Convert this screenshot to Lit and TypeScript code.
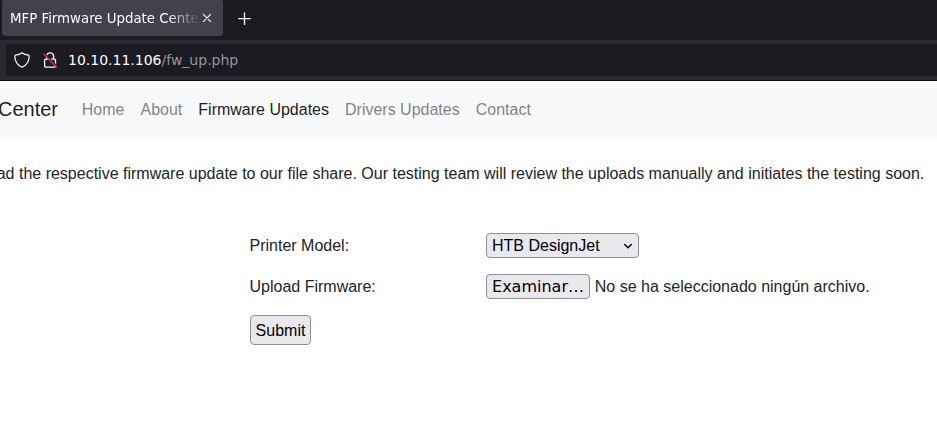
import { LitElement, html, css } from "lit";
import { customElement, property } from "lit/decorators.js";

@customElement("browser-chrome")
class BrowserChrome extends LitElement {
  @property() tabTitle = "";
  @property() host = "";
  @property() path = "";

  static styles = css`
    :host { display: block; height: 81px; box-sizing: border-box; background: #1c1b22; border-bottom: 1px solid #0c0c0d; color: #fbfbfe; font-family: "DejaVu Sans", sans-serif; }
    .tabs { display: flex; height: 40px; align-items: flex-start; }
    .tab { display: flex; align-items: center; box-sizing: border-box; width: 221px; height: 36px; margin-left: 2px; padding-left: 8px; background: #42414d; border-radius: 2px 2px 4px 4px; }
    .title { width: 190px; overflow: hidden; white-space: nowrap; font-size: 13.33px; line-height: 34px; padding-top: 2px; -webkit-mask-image: linear-gradient(to left, transparent, #000 32px); mask-image: linear-gradient(to left, transparent, #000 32px); }
    svg { display: block; flex: none; }
    .close { margin-left: 1px; }
    .plus { margin: 12px 0 0 15px; }
    .toolbar { display: flex; height: 40px; box-sizing: border-box; padding: 4px 0 4px 6px; background: #2b2a33; }
    .field { display: flex; flex: 1; align-items: center; background: #1c1b22; border-radius: 4px 0 0 4px; padding-left: 8px; }
    .lock { margin-left: 12px; }
    .url { margin-left: 10px; font-size: 14px; line-height: 32px; white-space: nowrap; }
    .path { color: #96959f; }
  `;

  render() {
    return html`
      <div class="tabs">
        <div class="tab">
          <div class="title">${this.tabTitle}</div>
          <svg class="close" width="12" height="12" viewBox="0 0 12 12" fill="none" stroke="#fbfbfe" stroke-width="1.1" stroke-linecap="round"><path d="M2.4 2.4l7.2 7.2M9.6 2.4L2.4 9.6"/></svg>
        </div>
        <svg class="plus" width="14" height="14" viewBox="0 0 14 14" fill="none" stroke="#fbfbfe" stroke-width="1.3" stroke-linecap="round"><path d="M6.5 1v11.4M.8 6.7h11.4"/></svg>
      </div>
      <div class="toolbar">
        <div class="field">
          <svg width="16" height="16" viewBox="0 0 16 16" fill="none" stroke="#fbfbfe" stroke-width="1.25" stroke-linejoin="round"><path d="M8 .8C6.5 2 3.5 3 1.5 3.2C.8 3.3.9 4 .9 4.7C1 9.5 3 13 8 15.2C13 13 15 9.5 15.1 4.7C15.1 4 15.2 3.3 14.5 3.2C12.5 3 9.5 2 8 .8Z"/></svg>
          <svg class="lock" width="16" height="16" viewBox="0 0 16 16" fill="none"><g stroke="#fbfbfe" stroke-width="1.3"><path d="M4.6 7.2V4.3a3.5 3.5 0 0 1 7 0v2.9"/><rect x="2.6" y="7.2" width="10.9" height="7.9" rx="1.2"/></g><path d="M1.9 .9l13.6 13.6" stroke="#1c1b22" stroke-width="1.2"/><path d="M1.3 1.8l13.6 13.6" stroke="#e22850" stroke-width="1.4"/></svg>
          <div class="url">${this.host}<span class="path">${this.path}</span></div>
        </div>
      </div>`;
  }
}

@customElement("app-root")
class AppRoot extends LitElement {
  static styles = css`
    :host { display: block; height: 438px; overflow: hidden; background: #fff; color: #212529; font: 16px/24px "Liberation Sans", Arial, sans-serif; }
    nav { display: flex; align-items: center; box-sizing: border-box; height: 56px; padding-top: 2px; background: #f8f9fa; white-space: nowrap; }
    .brand { width: 83.8px; margin: 0 0 2px -2px; font-size: 20px; line-height: 30px; color: rgba(0,0,0,.9); }
    .links { display: flex; gap: 16px; color: rgba(0,0,0,.5); }
    .active { color: rgba(0,0,0,.9); }
    .intro { margin: 25px 0 0 -3.3px; white-space: nowrap; }
    .form { display: grid; grid-template-columns: 236.5px max-content; row-gap: 16px; margin: 47px 0 0 249.5px; justify-items: start; }
    .row { display: flex; align-items: center; height: 25px; white-space: nowrap; }
    button, .select { box-sizing: border-box; height: 25px; margin: 0; border: 1px solid #8f8f9d; border-radius: 4px; background: #e9e9ed; color: #000; font: inherit; line-height: 23px; padding: 0 5px; }
    .select { display: flex; align-items: center; justify-content: space-between; width: 153px; }
    .browse { width: 104px; margin-right: 4.8px; padding: 0 4px; font-family: "DejaVu Sans", sans-serif; white-space: nowrap; }
    .submit { height: 30px; width: 61px; margin-left: .5px; padding: 1px 0 0; line-height: 28px; }
  `;

  render() {
    const links = ["Home", "About", "Firmware Updates", "Drivers Updates", "Contact"];
    return html`
      <browser-chrome .tabTitle=${"MFP Firmware Update Center"} .host=${"10.10.11.106"} .path=${"/fw_up.php"}></browser-chrome>
      <nav>
        <div class="brand">Center</div>
        <div class="links">${links.map((l) => html`<span class=${l === "Firmware Updates" ? "active" : ""}>${l}</span>`)}</div>
      </nav>
      <div class="intro">ad the respective firmware update to our file share. Our testing team will review the uploads manually and initiates the testing soon.</div>
      <div class="form">
        <div class="row">Printer Model:</div>
        <div class="row">
          <div class="select" role="combobox">HTB DesignJet
            <svg width="10" height="10" viewBox="0 0 10 10" fill="none" stroke="#000" stroke-width="1.5" stroke-linecap="round" stroke-linejoin="round"><path d="M1.7 3.5L5 6.8L8.3 3.5"/></svg>
          </div>
        </div>
        <div class="row">Upload Firmware:</div>
        <div class="row"><button class="browse">Examinar…</button>No se ha seleccionado ningún archivo.</div>
        <button class="submit">Submit</button>
      </div>`;
  }
}
